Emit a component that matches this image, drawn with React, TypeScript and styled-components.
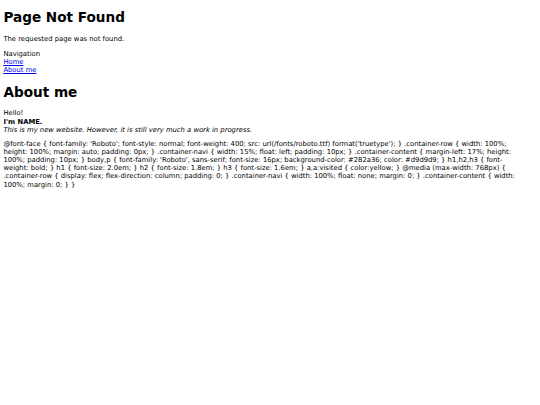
import styled, { createGlobalStyle } from 'styled-components';

// the reference is a plain unstyled page, photographed at ~0.42 scale
const BASE = 6.8;

const GlobalStyle = createGlobalStyle`
  html, body {
    background: #ffffff;
  }
  body {
    margin: 3.4px;
    font-family: "DejaVu Sans", Verdana, sans-serif;
    font-size: ${BASE}px;
    line-height: 1.2;
    color: #000000;
  }
`;

const Title = styled.h1<{ $first?: boolean }>`
  font-size: 2em;
  font-weight: bold;
  margin: 0.7em 0;
  margin-top: ${({ $first }) => ($first ? '5.5px' : '0.7em')};
`;

const Text = styled.p`
  margin: 1em 0;
`;

const Row = styled.div`
  display: block;
`;

const Navi = styled.nav`
  display: flex;
  flex-direction: column;
  align-items: flex-start;
`;

const NavLink = styled.a`
  color: #0000ee;
  text-decoration: underline;
`;

const Content = styled.div`
  display: block;
`;

const Intro = styled.p`
  margin: 1em 0 0.85em;
  display: flex;
  flex-direction: column;
`;

const Code = styled.p`
  margin: 0.85em 0;
  padding-right: 10px;
  word-wrap: break-word;
`;

const cssText = `@font-face { font-family: 'Roboto'; font-style: normal; font-weight: 400; src: url(/fonts/roboto.ttf) format('truetype'); } .container-row { width: 100%; height: 100%; margin: auto; padding: 0px; } .container-navi { width: 15%; float: left; padding: 10px; } .container-content { margin-left: 17%; height: 100%; padding: 10px; } body,p { font-family: 'Roboto', sans-serif; font-size: 16px; background-color: #282a36; color: #d9d9d9; } h1,h2,h3 { font-weight: bold; } h1 { font-size: 2.0em; } h2 { font-size: 1.8em; } h3 { font-size: 1.6em; } a,a:visited { color:yellow; } @media (max-width: 768px) { .container-row { display: flex; flex-direction: column; padding: 0; } .container-navi { width: 100%; float: none; margin: 0; } .container-content { width: 100%; margin: 0; } }`;

export default function App() {
  return (
    <>
      <GlobalStyle />
      <Title $first>Page Not Found</Title>
      <Text>The requested page was not found.</Text>
      <Row>
        <Navi>
          <span>Navigation</span>
          <NavLink href="#">Home</NavLink>
          <NavLink href="#">About me</NavLink>
        </Navi>
        <Content>
          <Title>About me</Title>
          <Intro>
            <span>Hello!</span>
            <b>I'm NAME.</b>
            <i>This is my new website. However, it is still very much a work in progress.</i>
          </Intro>
          <Code>{cssText}</Code>
        </Content>
      </Row>
    </>
  );
}
